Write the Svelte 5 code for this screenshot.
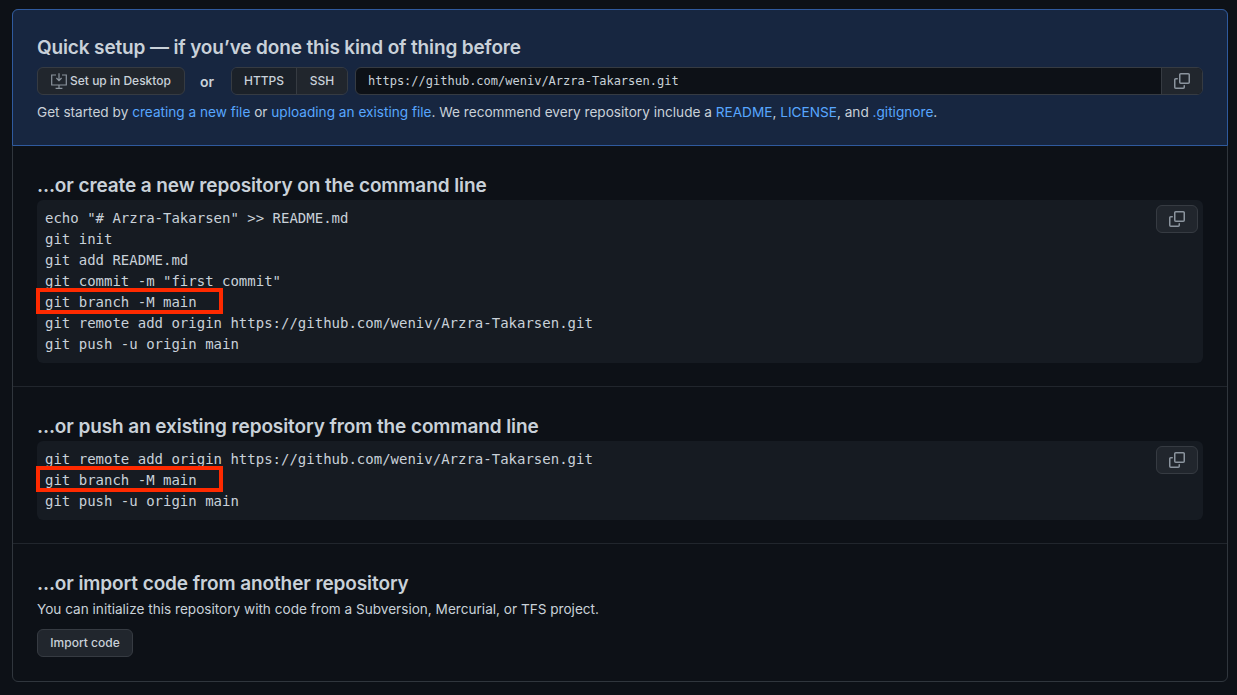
<script>
  const newRepoLines = [
    'echo "# Arzra-Takarsen" >> README.md',
    'git init',
    'git add README.md',
    'git commit -m "first commit"',
    'git branch -M main',
    'git remote add origin https://github.com/weniv/Arzra-Takarsen.git',
    'git push -u origin main'
  ];
  const pushLines = [
    'git remote add origin https://github.com/weniv/Arzra-Takarsen.git',
    'git branch -M main',
    'git push -u origin main'
  ];
  const marked = 'git branch -M main';
</script>

{#snippet copyIcon()}
  <svg class="copy" viewBox="0 0 16 16" width="16" height="16" fill="currentColor" aria-hidden="true">
    <path d="M0 6.75C0 5.784.784 5 1.75 5h1.5a.75.75 0 0 1 0 1.5h-1.5a.25.25 0 0 0-.25.25v7.5c0 .138.112.25.25.25h7.5a.25.25 0 0 0 .25-.25v-1.5a.75.75 0 0 1 1.5 0v1.5A1.75 1.75 0 0 1 9.25 16h-7.5A1.75 1.75 0 0 1 0 14.25Z"></path>
    <path d="M5 1.75C5 .784 5.784 0 6.75 0h7.5C15.216 0 16 .784 16 1.75v7.5A1.75 1.75 0 0 1 14.25 11h-7.5A1.75 1.75 0 0 1 5 9.25Zm1.75-.25a.25.25 0 0 0-.25.25v7.5c0 .138.112.25.25.25h7.5a.25.25 0 0 0 .25-.25v-7.5a.25.25 0 0 0-.25-.25Z"></path>
  </svg>
{/snippet}

{#snippet codeBlock(lines)}
  <div class="code">
    <button class="btn code-copy" aria-label="Copy">{@render copyIcon()}</button>
    <pre>{#each lines as line}<span class="line" class:marked={line === marked}>{line}</span>{/each}</pre>
  </div>
{/snippet}

<div class="page">
  <div class="box">
    <section class="quick">
      <h3>Quick setup — if you’ve done this kind of thing before</h3>
      <div class="controls">
        <button class="btn desktop">
          <svg viewBox="0 0 16 16" width="16" height="16" fill="none" stroke="currentColor" stroke-width="1.2" aria-hidden="true">
            <path d="M5 2H.7v10h14.6V2H11"></path>
            <path d="M8 .2v7.4M5.4 5 8 7.6 10.6 5"></path>
            <path d="M8 12v3M4.6 15.4h6.8"></path>
          </svg>
          Set up in Desktop
        </button>
        <span class="or">or</span>
        <div class="group">
          <button class="seg on">HTTPS</button>
          <button class="seg">SSH</button>
        </div>
        <div class="url">
          <span class="url-text">https://github.com/weniv/Arzra-Takarsen.git</span>
          <button class="url-copy" aria-label="Copy">{@render copyIcon()}</button>
        </div>
      </div>
      <p>Get started by <a href="#new">creating a new file</a> or <a href="#upload">uploading an existing file</a>. We recommend every repository include a <a href="#readme">README</a>, <a href="#license">LICENSE</a>, and <a href="#ignore">.gitignore</a>.</p>
    </section>

    <section class="part first">
      <h3>...or create a new repository on the command line</h3>
      {@render codeBlock(newRepoLines)}
    </section>

    <section class="part second">
      <h3>...or push an existing repository from the command line</h3>
      {@render codeBlock(pushLines)}
    </section>

    <section class="part last">
      <h3>...or import code from another repository</h3>
      <p>You can initialize this repository with code from a Subversion, Mercurial, or TFS project.</p>
      <button class="btn import">Import code</button>
    </section>
  </div>
</div>

<style>
  :global(body) {
    background: #0d1117;
    font-family: Inter, "Liberation Sans", sans-serif;
    color: #c9d1d9;
  }

  .page {
    padding: 9px 9px 13px 12px;
  }

  .box {
    border: 1px solid #30363d;
    border-radius: 6px;
    height: 673px;
    box-sizing: border-box;
  }

  section {
    padding: 0 24px;
  }

  h3 {
    margin: 0;
    font-size: 19px;
    line-height: 24px;
    font-weight: 600;
    letter-spacing: -0.1px;
  }

  p {
    margin: 0;
    font-size: 13.6px;
    line-height: 20px;
  }

  a {
    color: #58a6ff;
    text-decoration: none;
  }

  .quick {
    height: 137px;
    box-sizing: border-box;
    margin: -1px -1px 0;
    padding: 26px 24px 0;
    background: #172640;
    border: 1px solid #2f5a9e;
    border-radius: 6px 6px 0 0;
  }

  .quick h3 {
    letter-spacing: -0.14px;
  }

  .quick p {
    margin-top: 7px;
    font-size: 13.63px;
  }

  .controls {
    display: flex;
    align-items: center;
    margin-top: 7px;
    height: 28px;
  }

  .btn {
    display: inline-flex;
    align-items: center;
    justify-content: center;
    background: #21262d;
    border: 1px solid #363b42;
    border-radius: 6px;
    color: #c9d1d9;
    font: 500 12px/20px Inter, "Liberation Sans", sans-serif;
    padding: 0;
    box-sizing: border-box;
  }

  .desktop {
    width: 148px;
    height: 28px;
    gap: 3px;
  }

  .desktop svg {
    color: #8b949e;
  }

  .or {
    width: 46px;
    padding-right: 2px;
    box-sizing: border-box;
    text-align: center;
    font-size: 14px;
    font-weight: 600;
  }

  .group {
    display: flex;
    height: 28px;
    box-sizing: border-box;
    border: 1px solid #363b42;
    border-radius: 6px;
    overflow: hidden;
  }

  .seg {
    background: #21262d;
    border: 0;
    color: #c9d1d9;
    font: 500 12px/20px Inter, "Liberation Sans", sans-serif;
    padding: 0;
    width: 50px;
  }

  .seg.on {
    width: 65px;
    background: #1b2129;
    border-right: 1px solid #363b42;
  }

  .url {
    display: flex;
    flex: 1;
    height: 28px;
    margin-left: 7px;
    box-sizing: border-box;
    border: 1px solid #363b42;
    border-radius: 6px;
    background: #0d1117;
    overflow: hidden;
  }

  .url-text {
    flex: 1;
    padding-left: 12px;
    font: 12px/26px "DejaVu Sans Mono", monospace;
  }

  .url-copy {
    width: 41px;
    background: #21262d;
    border: 0;
    border-left: 1px solid #363b42;
    color: #8b949e;
    padding: 0;
    display: flex;
    align-items: center;
    justify-content: center;
  }

  .part {
    border-bottom: 1px solid #21262d;
  }

  .part.first {
    height: 241px;
    padding-top: 28px;
    box-sizing: border-box;
  }

  .part.second {
    height: 157px;
    padding-top: 28px;
    box-sizing: border-box;
  }

  .part.last {
    border-bottom: 0;
    padding-top: 28px;
  }

  .part.last p {
    margin-top: 3px;
  }

  .code {
    position: relative;
    margin-top: 2px;
    background: #161b22;
    border-radius: 6px;
    padding: 8px;
  }

  pre {
    margin: 0;
    font: 14px/21px "DejaVu Sans Mono", monospace;
    color: #c9d1d9;
  }

  .line {
    display: block;
    position: relative;
  }

  .line.marked::after {
    content: "";
    position: absolute;
    left: -9px;
    top: -4px;
    width: 187px;
    height: 26px;
    box-sizing: border-box;
    border: 4px solid #ff2a00;
  }

  .code-copy {
    position: absolute;
    top: 5px;
    right: 5px;
    width: 42px;
    height: 28px;
    color: #8b949e;
  }

  .import {
    margin-top: 10px;
    width: 96px;
    height: 28px;
  }
</style>
